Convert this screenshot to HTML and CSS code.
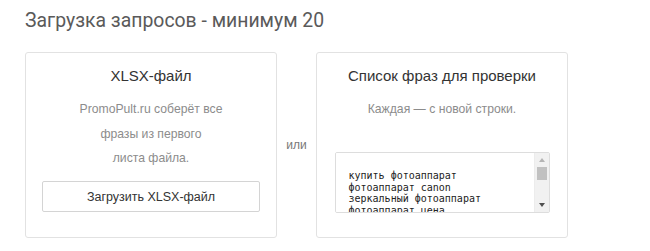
FILE: index.html
```html
<!DOCTYPE html>
<html lang="ru">
<head>
    <meta charset="UTF-8">
    <meta name="viewport" content="width=device-width, initial-scale=1.0">
    <title>Загрузка запросов</title>
    <link rel="stylesheet" href="styles.css">
</head>
<body>
    <div class="container">
        <h1>Загрузка запросов - минимум 20</h1>
        <div class="upload">
            <div class="card">
                <h2>XLSX-файл</h2>
                <p class="hint">PromoPult.ru соберёт все<br>фразы из первого<br>листа файла.</p>
                <button class="upload-btn">Загрузить XLSX-файл</button>
            </div>

            <div class="or">или</div>

            <div class="card">
                <h2>Список фраз для проверки</h2>
                <p class="hint">Каждая — с новой строки.</p>
                <div class="phrases-box">
                    <textarea class="phrases" id="phrases" spellcheck="false">купить фотоаппарат
фотоаппарат canon
зеркальный фотоаппарат
фотоаппарат цена
фотоаппарат nikon
цифровой фотоаппарат
фотоаппарат sony
недорогой фотоаппарат
фотоаппарат отзывы
фотоаппарат москва</textarea>
                    <!-- scrollbar drawn by hand, headless hides the native one -->
                    <div class="scrollbar">
                        <span class="arrow arrow-up"></span>
                        <span class="thumb"></span>
                        <span class="track"></span>
                        <span class="arrow arrow-down"></span>
                    </div>
                </div>
            </div>
        </div>
    </div>
</body>
</html>
```

FILE: styles.css
```css
body {
    margin: 0;
    background: #fff;
}

.container {
    padding: 0 25px;
}

h1 {
    margin: 0;
    padding-top: 9px;
    font-family: Roboto, "Liberation Sans", sans-serif;
    font-weight: 400;
    font-size: 19.4px;
    line-height: 24px;
    color: #5a5a5a;
}

.upload {
    display: flex;
    align-items: center;
    margin-top: 19px;
}

.card {
    box-sizing: border-box;
    width: 252px;
    height: 186px;
    padding: 14px 16px 0;
    border: 1px solid #e2e2e2;
    border-radius: 3px;
    text-align: center;
    font-family: Arial, "Liberation Sans", sans-serif;
}

.card h2 {
    margin: 0;
    font-size: 15px;
    font-weight: 400;
    line-height: 18px;
    color: #333;
}

.hint {
    margin: 12px 0 0;
    font-size: 12.2px;
    line-height: 24.5px;
    color: #8c8c8c;
}

.or {
    width: 39px;
    text-align: center;
    font-family: Arial, "Liberation Sans", sans-serif;
    font-size: 12px;
    color: #777;
}

.upload-btn {
    box-sizing: border-box;
    width: 218px;
    height: 31px;
    margin-top: 10.5px;
    padding: 0;
    border: 1px solid #d4d4d4;
    border-radius: 2px;
    background: #fff;
    font-family: Arial, "Liberation Sans", sans-serif;
    font-size: 12.5px;
    color: #333;
    cursor: pointer;
}

.phrases-box {
    display: flex;
    box-sizing: border-box;
    width: 215px;
    height: 61px;
    margin: 30.5px auto 0;
    border: 1px solid #ddd;
    border-radius: 2px;
    overflow: hidden;
}

.phrases {
    flex: 1;
    min-width: 0;
    margin: 0;
    padding: 17px 0 0 13px;
    border: none;
    resize: none;
    overflow: hidden;
    font-family: "DejaVu Sans Mono", monospace;
    font-size: 10px;
    line-height: 11.6px;
    color: #222;
    outline: none;
}

.scrollbar {
    display: flex;
    flex-direction: column;
    align-items: center;
    width: 14px;
    background: #f1f1f1;
    border-left: 1px solid #ececec;
}

.arrow {
    flex: 0 0 14px;
    display: flex;
    align-items: center;
    justify-content: center;
}

.arrow::before {
    content: "";
    width: 0;
    height: 0;
    border-left: 3.5px solid transparent;
    border-right: 3.5px solid transparent;
}

.arrow-up::before {
    border-bottom: 4px solid #b4b4b4;
}

.arrow-down::before {
    border-top: 4px solid #505050;
}

.thumb {
    flex: 0 0 13px;
    width: 10px;
    background: #c1c1c1;
}

.track {
    flex: 1;
}
```
